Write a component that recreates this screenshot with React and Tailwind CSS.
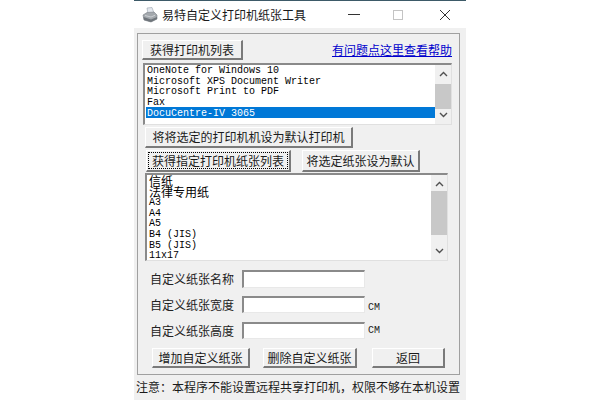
const CJK = { fontFamily: '"Noto Sans CJK SC","Liberation Sans",sans-serif' };

function Btn({ className = "", focused, children }) {
  return (
    <button
      style={CJK}
      className={`relative flex items-center justify-center bg-[#f0f0f0] border-t border-l border-t-white border-l-white border-r-2 border-b-2 border-r-[#7a7a7a] border-b-[#7a7a7a] text-[12px] leading-none text-[#1a1a1a] ${className}`}
    >
      {focused && <span className="absolute inset-[1px] border border-dotted border-black" />}
      {children}
    </button>
  );
}

function Scrollbar({ thumbTop, thumbHeight }) {
  return (
    <div className="relative w-[16px] h-full bg-[#f0f0f0] shrink-0">
      <svg className="absolute left-[4px] top-[6px]" width="9" height="6" viewBox="0 0 9 6">
        <path d="M1 5 L4.5 1.5 L8 5" fill="none" stroke="#505050" strokeWidth="1.4" />
      </svg>
      <div className="absolute left-0 w-[16px] bg-[#c8c8c8]" style={{ top: thumbTop, height: thumbHeight }} />
      <svg className="absolute left-[4px] bottom-[6px]" width="9" height="6" viewBox="0 0 9 6">
        <path d="M1 1 L4.5 4.5 L8 1" fill="none" stroke="#505050" strokeWidth="1.4" />
      </svg>
    </div>
  );
}

const mono = { fontFamily: '"Liberation Mono","Noto Sans CJK SC",monospace' };

function Row({ children, selected, cjk }) {
  return (
    <div
      style={cjk ? CJK : mono}
      className={`flex items-center whitespace-pre pl-[1px] ${cjk ? "h-[11px] text-[12px] leading-[11px]" : "h-[10.6px] text-[10px] pt-[2px] leading-none"} ${selected ? "bg-[#0078d7] text-white" : "text-black"}`}
    >
      {children}
    </div>
  );
}

function Field({ label, mt, h, cm }) {
  return (
    <div className={`flex items-center ml-[12px] ${mt} ${h}`}>
      <span style={CJK} className="w-[92px] text-[12px] leading-none text-[#222] whitespace-nowrap">{label}</span>
      <div className="w-[123px] h-full bg-white border-t-2 border-l-2 border-t-[#8a8a8a] border-l-[#8a8a8a] border-r border-b border-r-[#e8e8e8] border-b-[#e8e8e8]" />
      {cm && <span style={mono} className={`ml-[3px] text-[10px] leading-none text-[#222] ${cm}`}>CM</span>}
    </div>
  );
}

export default function App() {
  return (
    <div className="w-[600px] h-[400px] bg-white flex justify-center overflow-hidden">
      <div className="w-[332px] h-[400px] bg-[#f0f0f0] flex flex-col">
        <div className="h-[28px] bg-white border-t border-t-[#3d5a68] flex items-center shrink-0">
          <svg className="ml-[8px]" width="16" height="16" viewBox="0 0 16 16">
            <path d="M5 1 L10 0.5 L12 6 L6 7 Z" fill="#e4e8ee" stroke="#9aa4ae" strokeWidth="0.6" />
            <path d="M1 8 L5 5.5 L12 5 L15 8 L15 12 L9 15 L2 13 Z" fill="#a3a8ad" stroke="#7a8086" strokeWidth="0.6" />
            <path d="M1.5 10 L9 12.5 L15 10 L15 12 L9 15 L2 13 Z" fill="#6f757b" />
            <path d="M3 8.5 L9 10 L13 8.3" fill="none" stroke="#d5d9dd" strokeWidth="0.8" />
          </svg>
          <span style={CJK} className="ml-[4px] text-[12px] leading-none text-[#1a1a1a] whitespace-nowrap">易特自定义打印机纸张工具</span>
          <div className="ml-[42px] w-[12px] h-[1px] bg-[#333]" />
          <div className="ml-[33px] w-[10px] h-[10px] border border-[#c4c4c4]" />
          <svg className="ml-[36px]" width="12" height="12" viewBox="0 0 12 12">
            <path d="M1 1 L11 11 M11 1 L1 11" stroke="#333" strokeWidth="1" />
          </svg>
        </div>

        <div className="ml-[3px] mt-[5px] w-[323px] h-[342px] border border-[#a0a0a0] shrink-0 flex flex-col">
          <div className="mt-[6px] pl-[4px] pr-[7px] flex items-center justify-between">
            <Btn className="w-[101px] h-[20px]">获得打印机列表</Btn>
            <a style={CJK} className="text-[12px] leading-none text-[#0000cc] underline whitespace-nowrap">有问题点这里查看帮助</a>
          </div>

          <div className="mt-[3px] ml-[5px] w-[309px] h-[62px] bg-white flex border-t-2 border-l-2 border-t-[#8a8a8a] border-l-[#8a8a8a] border-r border-b border-r-[#e0e0e0] border-b-[#e0e0e0]">
            <div className="flex-1 pl-[1px]">
              <Row>OneNote for Windows 10</Row>
              <Row>Microsoft XPS Document Writer</Row>
              <Row>Microsoft Print to PDF</Row>
              <Row>Fax</Row>
              <Row selected>DocuCentre-IV 3065</Row>
            </div>
            <Scrollbar thumbTop={19} thumbHeight={25} />
          </div>

          <Btn className="mt-[2px] ml-[7px] w-[208px] h-[21px] shrink-0">将将选定的打印机机设为默认打印机</Btn>

          <div className="mt-[2px] ml-[8px] flex gap-[11px] h-[22px]">
            <Btn focused className="w-[145px] h-full">获得指定打印机纸张列表</Btn>
            <Btn className="w-[118px] h-full">将选定纸张设为默认</Btn>
          </div>

          <div className="mt-[1px] ml-[7px] w-[303px] h-[88px] bg-white flex border-t-2 border-l-2 border-t-[#8a8a8a] border-l-[#8a8a8a] border-r border-b border-r-[#e0e0e0] border-b-[#e0e0e0]">
            <div className="flex-1 pl-[1px]">
              <Row cjk>信纸</Row>
              <Row cjk>法律专用纸</Row>
              <Row>A3</Row>
              <Row>A4</Row>
              <Row>A5</Row>
              <Row>B4 (JIS)</Row>
              <Row>B5 (JIS)</Row>
              <Row>11x17</Row>
            </div>
            <Scrollbar thumbTop={16} thumbHeight={44} />
          </div>

          <Field label="自定义纸张名称" mt="mt-[9px]" h="h-[18px]" />
          <Field label="自定义纸张宽度" mt="mt-[8px]" h="h-[17px]" cm="mt-[6px]" />
          <Field label="自定义纸张高度" mt="mt-[9px]" h="h-[17px]" cm="mt-[1px]" />

          <div className="mt-[9px] ml-[14px] flex h-[20px]">
            <Btn className="w-[98px] h-full">增加自定义纸张</Btn>
            <Btn className="ml-[13px] w-[94px] h-full">删除自定义纸张</Btn>
            <Btn className="ml-[15px] w-[73px] h-full">返回</Btn>
          </div>
        </div>

        <div style={CJK} className="mt-[5px] ml-[2px] text-[12px] leading-[14px] text-[#1a1a1a] whitespace-nowrap">
          {"注意\uFF1A本程序不能设置远程共享打印机\uFF0C权限不够在本机设置"}
        </div>
      </div>
    </div>
  );
}
